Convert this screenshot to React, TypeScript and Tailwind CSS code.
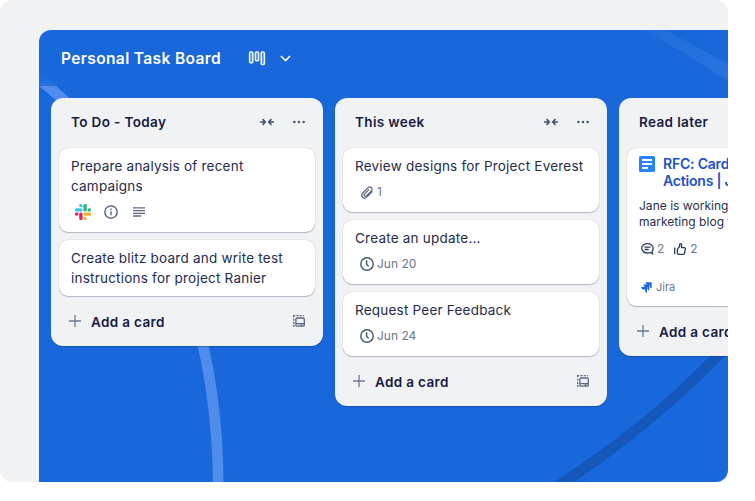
import React from "react";

function SlackIcon() {
  return (
    <svg width="16" height="16" viewBox="0 0 24 24">
      <path fill="#e01e5a" d="M5.04 15.17a2.53 2.53 0 1 1-2.52-2.53h2.52zM6.31 15.17a2.53 2.53 0 0 1 5.05 0v6.31a2.53 2.53 0 1 1-5.05 0z" />
      <path fill="#36c5f0" d="M8.83 5.04a2.53 2.53 0 1 1 2.53-2.52v2.52zM8.83 6.31a2.53 2.53 0 0 1 0 5.05H2.52a2.53 2.53 0 1 1 0-5.05z" />
      <path fill="#2eb67d" d="M18.96 8.83a2.53 2.53 0 1 1 2.52 2.53h-2.52zM17.69 8.83a2.53 2.53 0 0 1-5.05 0V2.52a2.53 2.53 0 1 1 5.05 0z" />
      <path fill="#ecb22e" d="M15.17 18.96a2.53 2.53 0 1 1-2.53 2.52v-2.52zM15.17 17.69a2.53 2.53 0 0 1 0-5.05h6.31a2.53 2.53 0 1 1 0 5.05z" />
    </svg>
  );
}

function InfoIcon() {
  return (
    <svg width="14" height="14" viewBox="0 0 14 14" fill="none" stroke="#44546f" strokeWidth="1.3">
      <circle cx="7" cy="7" r="6.2" />
      <path d="M7 6.2v4.1" />
      <path d="M7 3.5v1.4" />
    </svg>
  );
}

function LinesIcon() {
  return (
    <svg width="12" height="10" viewBox="0 0 12 10" fill="none" stroke="#5b6983" strokeWidth="1.3">
      <path d="M0 .9h12M0 3.6h12M0 6.3h12M0 9h8.2" />
    </svg>
  );
}

function CollapseIcon() {
  return (
    <svg width="14" height="8" viewBox="0 0 14 8" fill="none" stroke="#44546f" strokeWidth="1.6">
      <path d="M0 4h5M2.600 1.100 5.300 4 2.600 6.900M14 4H9M11.400 1.100 8.700 4l2.700 2.900" />
    </svg>
  );
}

function DotsIcon() {
  return (
    <svg width="12" height="4" viewBox="0 0 12 4" fill="#44546f">
      <circle cx="1.4" cy="2" r="1.25" />
      <circle cx="6" cy="2" r="1.25" />
      <circle cx="10.6" cy="2" r="1.25" />
    </svg>
  );
}

function TemplateIcon() {
  return (
    <svg width="12" height="12" viewBox="0 0 12 12" fill="none" stroke="#5a6781" strokeWidth="1.3">
      <rect x="2.900" y="3" width="8.400" height="8.200" rx="1.2" />
      <path d="M2.900 8.700h8.400" />
      <path d="M7.500 10h2" />
      <path d="M.7 2.300V.7h1.500M3.500.7h2M6.700.7h2M9.900.7h1M.7 3.700v2M.7 6.900v2M.7 9.900v1.300h.9" />
    </svg>
  );
}

function PlusIcon() {
  return (
    <svg width="12" height="12" viewBox="0 0 12 12" fill="none" stroke="#6b7a93" strokeWidth="1.3">
      <path d="M6 0v12M0 6h12" />
    </svg>
  );
}

function ClipIcon() {
  return (
    <svg width="12" height="13" viewBox="0 0 12 13" fill="none" stroke="#5b6983" strokeWidth="1.25" strokeLinecap="round">
      <path d="M11 5.700 6.300 10.600C4.900 12.100 3 12.500 1.700 11.300.4 10 .6 8.200 2 6.800L6.700 2C7.900.7 9.400.5 10.400 1.500c1 1 .8 2.400-.3 3.600L5.600 9.600c-.7.700-1.500.8-2.100.2-.6-.6-.4-1.300.2-2L7.600 3.900" />
    </svg>
  );
}

function ClockIcon() {
  return (
    <svg width="14" height="14" viewBox="0 0 14 14" fill="none" stroke="#44546f" strokeWidth="1.4">
      <circle cx="7" cy="7" r="6.200" />
      <path d="M6.600 3.200v4l2 2.100" />
    </svg>
  );
}

function DocIcon() {
  return (
    <svg className="shrink-0" width="16" height="16" viewBox="0 0 16 16">
      <rect width="16" height="16" rx="1.500" fill="#2684ff" />
      <path d="M3 4h10M3 8h10M3 12h6" stroke="#fff" strokeWidth="1.900" />
    </svg>
  );
}

function CommentIcon() {
  return (
    <svg width="13" height="12" viewBox="0 0 13 12" fill="none" stroke="#2c3e5d" strokeWidth="1.300">
      <path d="M12.200 5.300c0-2.600-2.500-4.600-5.700-4.600S.7 2.700.7 5.300s2.600 4.700 5.800 4.700c1 0 1.900-.2 2.700-.5l2.400 1.300-.4-2.700c.6-.8 1-1.700 1-2.800z" />
      <path d="M3.500 4.200h6M3.500 6.500h4.200" />
    </svg>
  );
}

function ThumbIcon() {
  return (
    <svg width="12" height="12" viewBox="0 0 12 12" fill="none" stroke="#2c3e5d" strokeWidth="1.300" strokeLinejoin="round">
      <path d="M.7 4.500v6.800" />
      <path d="M3.400 6.100 5.600 3.500V1.700c0-1.400 2-1.300 2 .1v2.800h2.600c.8 0 1.200.6 1.100 1.300l-.7 4.200c-.1.700-.6 1.200-1.300 1.200H4.500c-.7 0-1.100-.4-1.100-1.100z" />
    </svg>
  );
}

function JiraIcon() {
  return (
    <svg width="11" height="11" viewBox="0 0 11 11" fill="#1d63ed">
      <path d="M4.600.3h6v6c-1.400-.2-2-1-2-2.200V2.900H7.300C5.700 2.900 4.700 2 4.600.3z" />
      <path d="M2.500 2.600h5.700v5.900c-1.300-.2-1.900-1-1.900-2.200V5.200H5.200C3.500 5.200 2.600 4.300 2.500 2.600z" />
      <path d="M.2 4.900h5.800v5.800c-1.300-.2-1.900-1-1.900-2.200V7.400H2.900C1.200 7.400.3 6.600.2 4.900z" />
    </svg>
  );
}

function BoardIcon() {
  return (
    <svg width="18" height="15" viewBox="0 0 18 15" fill="#ffffff40" stroke="#f1f6ff" strokeWidth="1.500">
      <rect x="1.600" y="1" width="3.200" height="10.800" rx="1" />
      <rect x="7.400" y="1" width="3.200" height="8.800" rx="1" />
      <rect x="13.200" y="1" width="3.200" height="12.600" rx="1" />
    </svg>
  );
}

function Backdrop() {
  return (
    <svg className="absolute inset-0" width="689" height="452" viewBox="39 30 689 452" fill="none">
      <defs>
        <linearGradient id="fade" gradientUnits="userSpaceOnUse" x1="650" y1="30" x2="728" y2="75">
          <stop offset="0" stopColor="#ffffff" stopOpacity=".03" />
          <stop offset="1" stopColor="#ffffff" stopOpacity=".07" />
        </linearGradient>
        <linearGradient id="edge" x1="0" y1="1" x2="0" y2="0">
          <stop offset="0" stopColor="#ffffff" stopOpacity=".06" />
          <stop offset="1" stopColor="#ffffff" stopOpacity="0" />
        </linearGradient>
      </defs>
      <path d="M39 74 58 86H39z" fill="url(#edge)" />
      <path d="M39 86h17Q180 190 208.500 345 223 410 223.500 482H213Q212 410 197.500 345 170 190 39 86z" fill="#4f8cec" />
      <path d="M643 30h23q34 19 62 34v17Q686 53 643 30z" fill="url(#fade)" />
      <path d="M554 482Q644 424 712 354h16v-0.500Q652 430 574 482z" fill="#1558bc" />
    </svg>
  );
}

function Column({ title, children, template }: { title: string; children: React.ReactNode; template?: boolean }) {
  return (
    <section className="w-[272px] shrink-0 rounded-xl bg-[#f1f2f4] px-2 shadow-[0_1px_1px_rgba(9,30,66,0.3)]">
      <header className="flex h-[50px] items-center pr-[10px] pb-[3px] pl-3">
        <h2 className="flex-1 text-[13.5px] leading-5 font-semibold tracking-[0.36px] text-[#161b47]">{title}</h2>
        <CollapseIcon />
        <span className="ml-[19px] flex"><DotsIcon /></span>
      </header>
      <div className="flex flex-col gap-2">{children}</div>
      <footer className="flex h-[49.5px] items-center pt-[1px] pr-[10px] pl-[10px]">
        <PlusIcon />
        <span className="ml-[10px] flex-1 pt-[1px] text-[13.5px] leading-5 font-semibold tracking-[0.34px] whitespace-nowrap text-[#161b47]">Add a card</span>
        {template && <TemplateIcon />}
      </footer>
    </section>
  );
}

function Card({ children, badges }: { children: React.ReactNode; badges?: React.ReactNode }) {
  return (
    <article className="rounded-[9px] bg-white px-3 py-2 shadow-[0_1px_1px_rgba(9,30,66,0.25),0_0_1px_rgba(9,30,66,0.31)]">
      <p className="text-[13.5px] leading-5 tracking-[0.22px] whitespace-nowrap text-[#242b4d]">{children}</p>
      {badges && <div className="mt-2 mb-1 flex h-4 items-center text-[12px] text-[#6b778f]">{badges}</div>}
    </article>
  );
}

function DueDate({ date }: { date: string }) {
  return (
    <span className="ml-[5px] flex items-center gap-[3px]">
      <ClockIcon />
      {date}
    </span>
  );
}

export default function App() {
  return (
    <div className="h-[501px] w-[755px] overflow-hidden bg-white font-['Inter',sans-serif]">
      <main className="h-[482px] w-[728px] overflow-hidden rounded-xl bg-[#f1f2f4] pt-[30px] pl-[39px]">
        <div className="relative h-[452px] overflow-hidden rounded-tl-xl bg-[#1868db]">
          <Backdrop />
          <div className="relative">
            <header className="flex h-[68px] items-center pb-[12px] pl-[22px] text-white">
              <h1 className="w-[187px] pt-[2px] text-[15.5px] leading-6 font-semibold tracking-[0.37px] whitespace-nowrap">Personal Task Board</h1>
              <BoardIcon />
              <svg className="ml-[14px]" width="11" height="7" viewBox="0 0 11 7" fill="none" stroke="#fff" strokeWidth="1.600">
                <path d="m1 1 4.500 4.500L10 1" />
              </svg>
            </header>
            <div className="flex items-start gap-3 pl-3">
              <Column title="To Do - Today" template>
                <Card
                  badges={
                    <>
                      <span className="ml-[4px] flex"><SlackIcon /></span>
                      <span className="ml-[13px] flex"><InfoIcon /></span>
                      <span className="ml-[15px] flex"><LinesIcon /></span>
                    </>
                  }
                >
                  Prepare analysis of recent<br />campaigns
                </Card>
                <Card>Create blitz board and write test<br />instructions for project Ranier</Card>
              </Column>
              <Column title="This week" template>
                <Card badges={<span className="ml-[6px] flex items-center gap-[4px]"><ClipIcon />1</span>}>
                  Review designs for Project Everest
                </Card>
                <Card badges={<DueDate date="Jun 20" />}>Create an update...</Card>
                <Card badges={<DueDate date="Jun 24" />}>Request Peer Feedback</Card>
              </Column>
              <Column title="Read later">
                <article className="h-[158px] rounded-[9px] bg-white px-3 pt-2 whitespace-nowrap shadow-[0_1px_1px_rgba(9,30,66,0.25),0_0_1px_rgba(9,30,66,0.31)]">
                  <div className="flex gap-[8px]">
                    <DocIcon />
                    <h3 className="-mt-px text-[14px] leading-[17px] font-semibold tracking-[-0.2px] text-[#1d4fd0]">RFC: Card<br />Actions | Jira</h3>
                  </div>
                  <p className="mt-[9px] text-[12px] leading-4 tracking-[0.02px] text-[#27304f]">Jane is working on<br />marketing blog for</p>
                  <div className="mt-[11px] flex h-4 items-center text-[12px] text-[#6b778f]">
                    <span className="ml-[2px] flex"><CommentIcon /></span>
                    <span className="ml-[3px]">2</span>
                    <span className="ml-[10px] flex"><ThumbIcon /></span>
                    <span className="ml-[4px]">2</span>
                  </div>
                  <div className="mt-[22px] ml-[2px] flex h-4 items-center gap-[4px] text-[11px] text-[#6b778f]">
                    <JiraIcon />
                    Jira
                  </div>
                </article>
              </Column>
            </div>
          </div>
        </div>
      </main>
    </div>
  );
}
